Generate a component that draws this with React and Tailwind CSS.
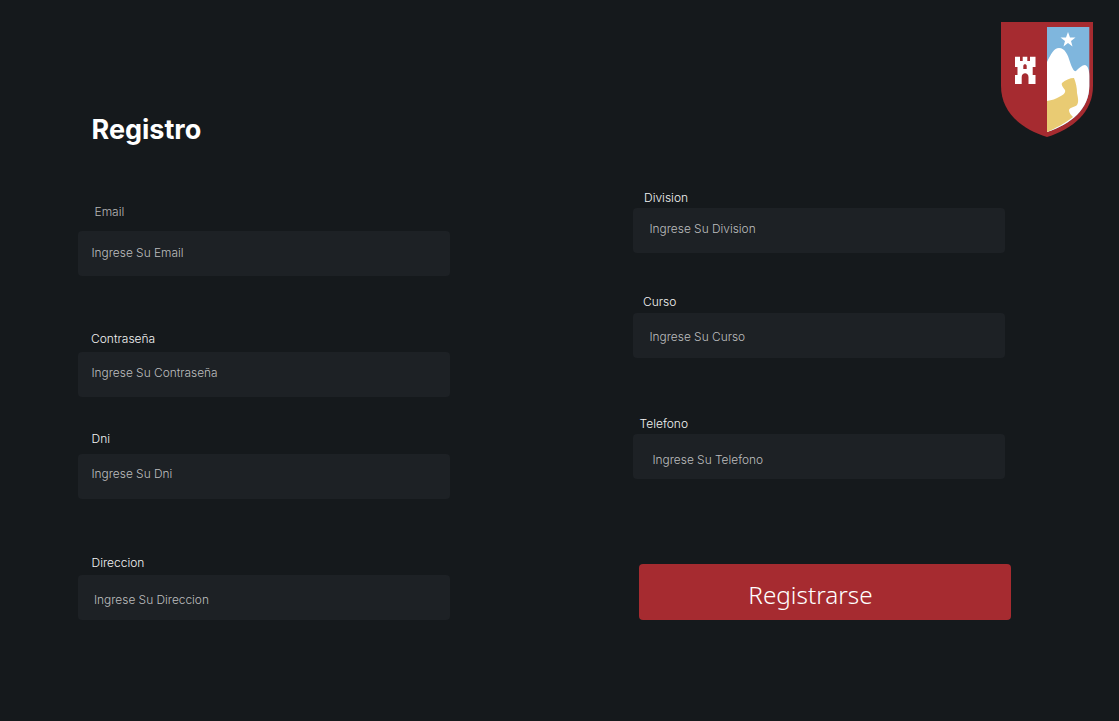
import React from 'react';

const Field = ({ label, placeholder, className, labelClass, inputClass }) => (
  <label className={`flex flex-col ${className}`}>
    <span className={`text-xs leading-[15px] font-light ${labelClass}`}>{label}</span>
    <input
      type="text"
      placeholder={placeholder}
      className={`h-[45px] w-[372px] rounded bg-[#1d2125] text-[11.900px] font-light text-[#bcbdbe] outline-none placeholder:text-[#bcbdbe] ${inputClass}`}
    />
  </label>
);

const Shield = () => (
  <svg width="92" height="115" viewBox="0 0 92 115" className="self-end">
    <path d="M0 0H92V64C92 90 72 107 46 115C20 107 0 90 0 64Z" fill="#a62b30" />
    <path d="M46 5H88.300V64C88.300 87 70 102 46 110Z" fill="#7fb6dd" />
    <path d="M46 40C50 32 53 26 58 26C64 26 67 33 69 40C71 46 73 50 75 49C78 46 81 43 84 43C87 44 88.300 48 88.300 54V64C88.300 87 70 102 46 110Z" fill="#ffffff" />
    <path d="M46 79C51 78 55 77 58 75C62 73 65 71 64 68C62 65 60 63 61 61C64 58 69 56 73 56C75 61 76 66 76 71C77 76 78 80 76 83C74 85 69 85 68 88C68 91 70 93 72 95C63 102 55 106 46 110Z" fill="#e9cb73" />
    <path d="M67 10L69 15.500H74.500L70 19L71.500 24.500L67 21L62.500 24.500L64 19L59.500 15.500H65Z" fill="#ffffff" />
    <path d="M14 34.700H19V39H21.700V34.700H26.300V39H29V34.700H34.500V45H31.700V53H34.500V62H27.500V55C27.500 50 20.700 50 20.700 55V62H14V53H16.500V45H14Z" fill="#ffffff" />
    <path d="M22.300 47V44C22.300 41.500 25.700 41.500 25.700 44V47Z" fill="#a62b30" />
  </svg>
);

const App = () => {
  return (
    <div className="flex h-[721px] w-[1119px] overflow-hidden bg-[#15191c] font-['Inter',sans-serif] text-[#f2f3f3]">
      <section className="ml-[78px] flex w-[372px] flex-col pt-[112px]">
        <h1 className="ml-[13.5px] text-[27px] leading-[36px] font-bold text-white">Registro</h1>
        <Field
          className="mt-[56px]"
          label="Email"
          labelClass="ml-[16.500px] mb-[12px] text-[#b5b6b7]"
          placeholder="Ingrese Su Email"
          inputClass="pl-[13.500px] pb-[3px]"
        />
        <Field
          className="mt-[55px]"
          label="Contraseña"
          labelClass="ml-[13px] mb-[6px]"
          placeholder="Ingrese Su Contraseña"
          inputClass="pl-[13.500px] pb-[5px]"
        />
        <Field
          className="mt-[34px]"
          label="Dni"
          labelClass="ml-[13.500px] mb-[8px]"
          placeholder="Ingrese Su Dni"
          inputClass="pl-[13.500px] pb-[6px]"
        />
        <Field
          className="mt-[56px]"
          label="Direccion"
          labelClass="ml-[13.500px] mb-[5px]"
          placeholder="Ingrese Su Direccion"
          inputClass="pl-[16px] pt-[4px]"
        />
      </section>
      <section className="ml-[183px] flex w-[460px] flex-col pt-[22px]">
        <Shield />
        <Field
          className="mt-[53px]"
          label="Division"
          labelClass="ml-[11px] mb-[3px]"
          placeholder="Ingrese Su Division"
          inputClass="pl-[16.500px] pb-[4px]"
        />
        <Field
          className="mt-[41px]"
          label="Curso"
          labelClass="ml-[10px] mb-[4px]"
          placeholder="Ingrese Su Curso"
          inputClass="pl-[16.500px] pt-[2px]"
        />
        <Field
          className="mt-[58px]"
          label="Telefono"
          labelClass="ml-[6.500px] mb-[3px]"
          placeholder="Ingrese Su Telefono"
          inputClass="pl-[19.500px] pt-[6px]"
        />
        <button className="mt-[85px] ml-[6px] h-[56px] w-[372px] rounded bg-[#a62b30] pt-[7px] pr-[29px] font-['Noto_Sans',sans-serif] text-[24.300px] font-light text-white">
          Registrarse
        </button>
      </section>
    </div>
  );
};

export default App;
